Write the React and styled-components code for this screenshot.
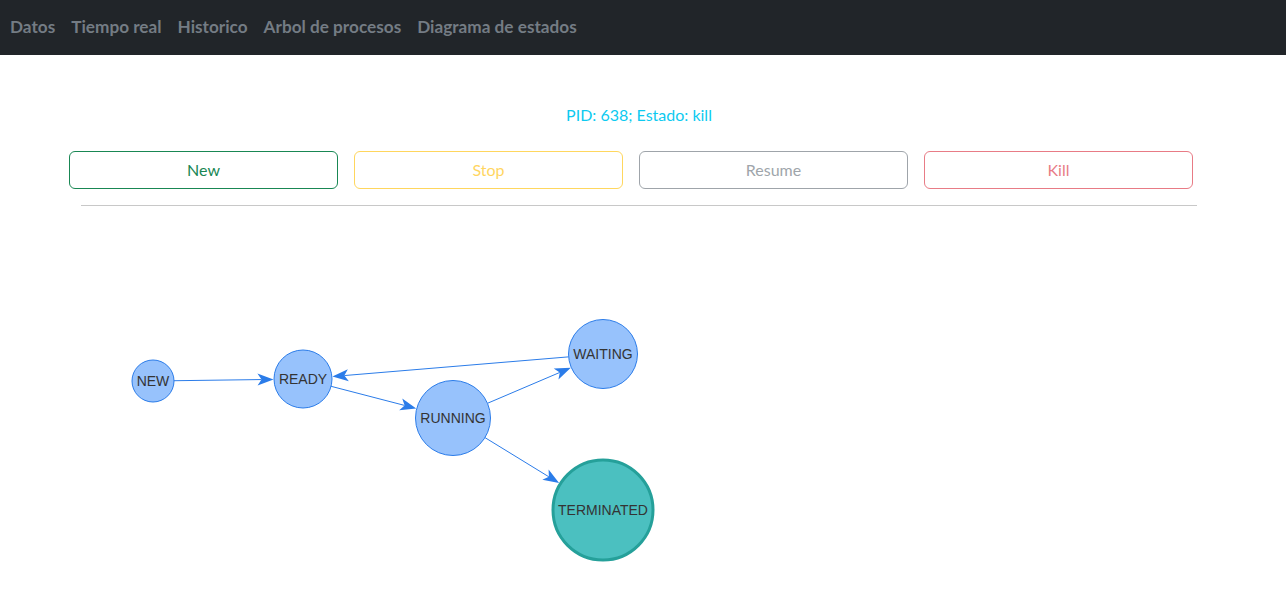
import React from "react";
import styled, { createGlobalStyle } from "styled-components";

const Global = createGlobalStyle`
  html, body { margin: 0; padding: 0; background: #fff; }
  body { font-family: "Lato", "Noto Sans", sans-serif; }
`;

const Navbar = styled.nav`
  height: 55px;
  background: #212529;
  display: flex;
  align-items: center;
  padding-left: 2px;
`;

const NavLink = styled.a`
  font-family: "Lato", "Noto Sans", sans-serif;
  font-weight: 700;
  font-size: 17.2px;
  color: #747c84;
  padding: 0 8px;
  text-decoration: none;
  line-height: 24px;
  margin-top: -2px;
`;

const Main = styled.main`
  padding: 48px 0 0;
`;

const Status = styled.div`
  text-align: center;
  color: #0dcaf0;
  font-size: 16px;
  line-height: 24px;
  padding-right: 8px;
`;

const ButtonRow = styled.div`
  display: grid;
  grid-template-columns: repeat(4, 269px);
  gap: 16px;
  margin: 24px 0 0 69px;
`;

const Button = styled.button`
  height: 38px;
  box-sizing: border-box;
  border: 1px solid ${(p) => p.$color};
  color: ${(p) => p.$color};
  background: transparent;
  border-radius: 6px;
  font-family: "Lato", "Noto Sans", sans-serif;
  font-size: 16px;
  opacity: ${(p) => (p.disabled ? 0.65 : 1)};
  padding: 0 0 2px;
`;

const Rule = styled.hr`
  margin: 16px 89px 0 81px;
  border: 0;
  border-top: 1px solid #c8c8c8;
`;

const Graph = styled.svg`
  display: block;
  margin-top: 9px;
`;

const nodes = {
  NEW: { x: 153, y: 381, r: 21 },
  READY: { x: 303, y: 379, r: 29 },
  RUNNING: { x: 453, y: 418, r: 37.5 },
  WAITING: { x: 603, y: 354, r: 34.5 },
  TERMINATED: { x: 603, y: 510, r: 50, term: true },
};

const edges = [
  ["NEW", "READY"],
  ["READY", "RUNNING"],
  ["RUNNING", "WAITING"],
  ["WAITING", "READY"],
  ["RUNNING", "TERMINATED"],
];

function Edge({ from, to }) {
  const a = nodes[from];
  const b = nodes[to];
  const dx = b.x - a.x;
  const dy = b.y - a.y;
  const len = Math.hypot(dx, dy);
  const ux = dx / len;
  const uy = dy / len;
  const sx = a.x + ux * a.r;
  const sy = a.y + uy * a.r;
  const tx = b.x - ux * (b.r + (b.term ? 1.5 : 0.5));
  const ty = b.y - uy * (b.r + (b.term ? 1.5 : 0.5));
  const L = 16;
  const W = 6;
  const bx = tx - ux * L;
  const by = ty - uy * L;
  const px = -uy;
  const py = ux;
  const ix = tx - ux * L * 0.75;
  const iy = ty - uy * L * 0.75;
  return (
    <g>
      <line x1={sx} y1={sy} x2={ix} y2={iy} stroke="#2b7ce9" strokeWidth="1" />
      <polygon
        points={`${tx},${ty} ${bx + px * W},${by + py * W} ${ix},${iy} ${bx - px * W},${by - py * W}`}
        fill="#2b7ce9"
      />
    </g>
  );
}

export default function App() {
  const links = ["Datos", "Tiempo real", "Historico", "Arbol de procesos", "Diagrama de estados"];
  return (
    <>
      <Global />
      <Navbar>
        {links.map((l) => (
          <NavLink key={l} href="#">{l}</NavLink>
        ))}
      </Navbar>
      <Main>
        <Status>PID: 638; Estado: kill</Status>
        <ButtonRow>
          <Button $color="#198754">New</Button>
          <Button $color="#ffc107" disabled>Stop</Button>
          <Button $color="#6c757d" disabled>Resume</Button>
          <Button $color="#dc3545" disabled>Kill</Button>
        </ButtonRow>
        <Rule />
        <Graph width="1286" height="392" viewBox="0 215 1286 392">
          {edges.map(([f, t]) => (
            <Edge key={f + t} from={f} to={t} />
          ))}
          {Object.entries(nodes).map(([name, n]) => (
            <g key={name}>
              <circle
                cx={n.x}
                cy={n.y}
                r={n.r}
                fill={n.term ? "#4bc0c0" : "#97c2fc"}
                stroke={n.term ? "#25a09a" : "#2b7ce9"}
                strokeWidth={n.term ? 3 : 1}
              />
              <text
                x={n.x}
                y={n.y}
                textAnchor="middle"
                dominantBaseline="central"
                fontFamily="'Liberation Sans', Arial, sans-serif"
                fontSize="14"
                fill="#343434"
              >
                {name}
              </text>
            </g>
          ))}
        </Graph>
      </Main>
    </>
  );
}
